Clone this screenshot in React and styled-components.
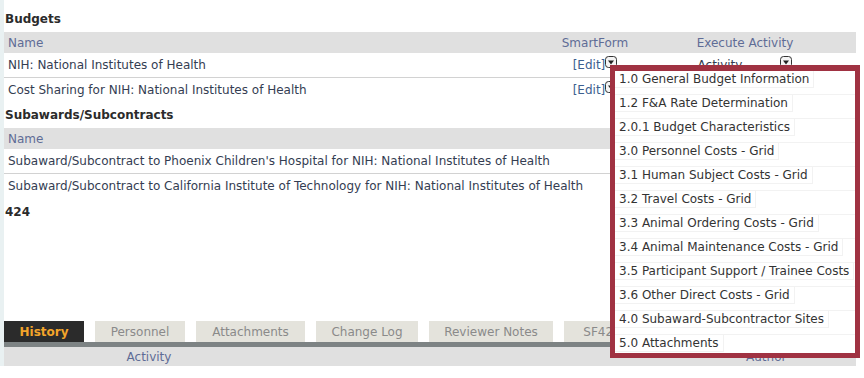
import React from "react";
import styled, { createGlobalStyle } from "styled-components";

const GlobalStyle = createGlobalStyle`
  html, body {
    margin: 0;
    padding: 0;
    background: #fff;
  }
  body {
    font-family: "DejaVu Sans", Verdana, sans-serif;
    font-size: 12px;
    color: #343d52;
  }
`;

const Page = styled.div`
  position: relative;
  width: 864px;
  height: 378px;
  overflow: hidden;
`;

const Content = styled.div`
  width: 856px;
  height: 366px;
  border-left: 4px solid #e9f1f2;
  display: flex;
  flex-direction: column;
  padding-top: 9px;
  box-sizing: border-box;
`;

const SectionTitle = styled.h3`
  margin: ${(p) => p.$gap || 0}px 0 3px;
  padding-left: 1px;
  font-size: 12px;
  font-weight: bold;
  line-height: 20px;
  color: #2b2b2b;
`;

const Table = styled.div`
  display: flex;
  flex-direction: column;
`;

const Row = styled.div`
  display: grid;
  grid-template-columns: ${(p) => p.$cols || "1fr"};
  align-items: center;
  height: ${(p) => (p.$head ? "21px" : "24px")};
  padding-left: 4px;
  background: ${(p) => (p.$head ? "#e0e0e0" : "#fff")};
  color: ${(p) => (p.$head ? "#5f6c96" : "#343d52")};
  border-bottom: ${(p) => (p.$line ? "1px solid #d2d2d2" : "none")};
`;

const Cell = styled.div`
  white-space: nowrap;
  display: flex;
  justify-content: ${(p) => (p.$align === "center" ? "center" : "flex-start")};
  align-items: center;
`;

const EditLink = styled.span`
  color: #3d5f8f;
`;

const Total = styled.div`
  margin-top: 4px;
  padding-left: 1px;
  font-weight: bold;
  line-height: 20px;
  color: #2b2b2b;
`;

const Spacer = styled.div`
  flex: 1;
`;

const Tabs = styled.div`
  display: flex;
  gap: 11px;
  height: 21px;
`;

const Tab = styled.div`
  display: flex;
  align-items: center;
  justify-content: center;
  width: ${(p) => p.$w}px;
  flex-shrink: 0;
  background: ${(p) => (p.$active ? "#2b2b2b" : "#e4e3dc")};
  color: ${(p) => (p.$active ? "#f4a52a" : "#8a8a8a")};
  font-weight: ${(p) => (p.$active ? "bold" : "normal")};
`;

const TabRule = styled.div`
  height: 5px;
  background: #7d8384;
`;

const HistoryHead = styled.div`
  display: grid;
  grid-template-columns: 290px 1fr 110px;
  height: 19px;
  align-items: center;
  background: #e0e0e0;
  color: #5f6c96;
`;

const Menu = styled.div`
  position: absolute;
  left: 610px;
  top: 65px;
  width: 240px;
  border: 5px solid #a03242;
  border-top-width: 6px;
  background: #fff;
`;

const MenuList = styled.ul`
  height: 282px;
  overflow: hidden;
  margin: 0;
  padding: 0;
  list-style: none;
`;

const MenuItem = styled.li`
  height: 23px;
  display: flex;
  align-items: flex-start;
  border-bottom: 1px solid #f2f2f2;
  color: #333;
  span {
    padding: 0 4px;
    line-height: 16px;
    border-right: 1px solid #f2f2f2;
    border-bottom: 1px solid #f2f2f2;
  }
`;

const DropIcon = ({ gap = 0 }) => (
  <svg
    width="12"
    height="12"
    viewBox="0 0 12 12"
    style={{ alignSelf: "flex-start", marginTop: -2, marginLeft: gap, flexShrink: 0 }}
  >
    <rect x="0.5" y="0.5" width="11" height="11" rx="3" fill="#f4f4f4" stroke="#333" />
    <path d="M3 4.5 L9 4.5 L6 8.5 Z" fill="#222" />
  </svg>
);

const budgetCols = "1fr 110px 190px 16px";

const menuItems = [
  "1.0 General Budget Information",
  "1.2 F&A Rate Determination",
  "2.0.1 Budget Characteristics",
  "3.0 Personnel Costs - Grid",
  "3.1 Human Subject Costs - Grid",
  "3.2 Travel Costs - Grid",
  "3.3 Animal Ordering Costs - Grid",
  "3.4 Animal Maintenance Costs - Grid",
  "3.5 Participant Support / Trainee Costs",
  "3.6 Other Direct Costs - Grid",
  "4.0 Subaward-Subcontractor Sites",
  "5.0 Attachments",
];

const tabs = [
  { label: "History", w: 80, active: true },
  { label: "Personnel", w: 90 },
  { label: "Attachments", w: 109 },
  { label: "Change Log", w: 102 },
  { label: "Reviewer Notes", w: 124 },
  { label: "SF424", w: 76 },
];

export default function App() {
  return (
    <Page>
      <GlobalStyle />
      <Content>
        <SectionTitle>Budgets</SectionTitle>
        <Table>
          <Row $head $cols={budgetCols}>
            <Cell>Name</Cell>
            <Cell $align="center">SmartForm</Cell>
            <Cell $align="center">Execute Activity</Cell>
            <Cell />
          </Row>
          <Row $line $cols={budgetCols}>
            <Cell>NIH: National Institutes of Health</Cell>
            <Cell $align="center">
              <EditLink>[Edit]</EditLink>
              <DropIcon />
            </Cell>
            <Cell $align="center">
              Activity
              <DropIcon gap={38} />
            </Cell>
            <Cell />
          </Row>
          <Row $cols={budgetCols}>
            <Cell>Cost Sharing for NIH: National Institutes of Health</Cell>
            <Cell $align="center">
              <EditLink>[Edit]</EditLink>
              <DropIcon />
            </Cell>
            <Cell $align="center">
              Activity
              <DropIcon gap={38} />
            </Cell>
            <Cell />
          </Row>
        </Table>

        <SectionTitle $gap={3}>Subawards/Subcontracts</SectionTitle>
        <Table>
          <Row $head>
            <Cell>Name</Cell>
          </Row>
          <Row $line>
            <Cell>Subaward/Subcontract to Phoenix Children's Hospital for NIH: National Institutes of Health</Cell>
          </Row>
          <Row>
            <Cell>Subaward/Subcontract to California Institute of Technology for NIH: National Institutes of Health</Cell>
          </Row>
        </Table>
        <Total>424</Total>

        <Spacer />

        <Tabs>
          {tabs.map((t) => (
            <Tab key={t.label} $w={t.w} $active={t.active}>
              {t.label}
            </Tab>
          ))}
        </Tabs>
        <TabRule />
        <HistoryHead>
          <Cell $align="center">Activity</Cell>
          <Cell />
          <Cell>Author</Cell>
        </HistoryHead>
      </Content>

      <Menu>
        <MenuList>
          {menuItems.map((m) => (
            <MenuItem key={m}>
              <span>{m}</span>
            </MenuItem>
          ))}
        </MenuList>
      </Menu>
    </Page>
  );
}
